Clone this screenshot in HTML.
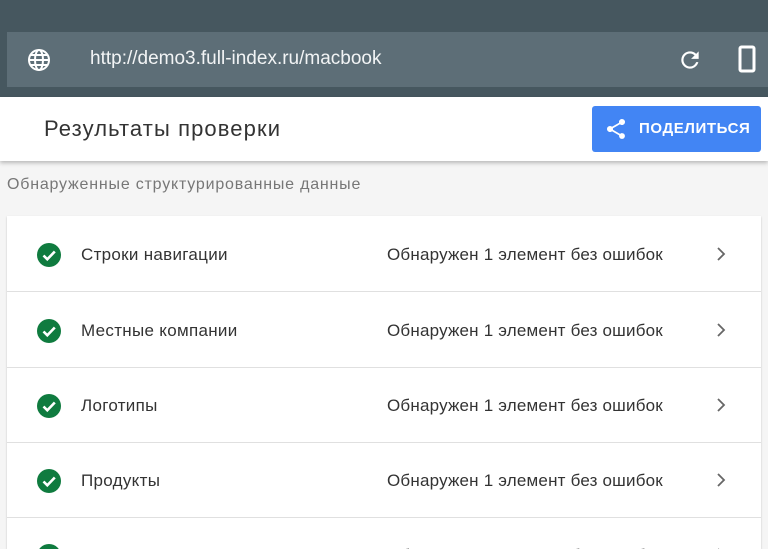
<!DOCTYPE html>
<html><head><meta charset="utf-8"><style>
*{margin:0;padding:0;box-sizing:border-box}
html,body{width:768px;height:549px;overflow:hidden}
body{background:#f5f5f5;font-family:"Liberation Sans",Roboto,sans-serif;position:relative}
.top{position:absolute;left:0;top:0;width:768px;height:97px;background:#46575f}
.url{position:absolute;left:7px;top:32px;width:761px;height:55px;background:#5d6e77}
.url .t{position:absolute;left:83px;top:16px;color:#f2f4f5;font-size:19px}
.hdr{position:absolute;left:0;top:97px;width:768px;height:64px;background:#fff;box-shadow:0 2px 4px rgba(0,0,0,.25)}
.hdr .t{position:absolute;left:44px;top:19px;font-size:22px;letter-spacing:1.1px;color:#333}
.btn{position:absolute;left:592px;top:9px;width:169px;height:46px;background:#4285f4;border-radius:3px;color:#fff;font-weight:bold;font-size:15px}
.btn span{position:absolute;left:47px;top:14px;letter-spacing:.6px}
.sub{position:absolute;left:7px;top:176px;font-size:16px;letter-spacing:.8px;color:#777}
.card{position:absolute;left:7px;top:216px;width:754px;height:333px;background:#fff;box-shadow:0 1px 2px rgba(0,0,0,.2)}
.row{position:absolute;left:0;width:754px;height:76px;border-bottom:1px solid #e0e0e0}
.row .ic{position:absolute;left:30px;top:27px}
.row .n{position:absolute;left:74px;top:29px;font-size:17px;letter-spacing:.3px;color:#333}
.row .s{position:absolute;left:380px;top:29px;font-size:17px;letter-spacing:.2px;color:#333}
.row .c{position:absolute;left:708px;top:30px}
</style></head><body>
<div class="top"></div>
<div class="url">
<svg style="position:absolute;left:20px;top:16px" width="24" height="24" viewBox="0 0 24 24"><circle cx="12" cy="12" r="10" fill="none" stroke="#fff" stroke-width="2"/><ellipse cx="12" cy="12" rx="4" ry="10" fill="none" stroke="#fff" stroke-width="2"/><path d="M2 12h20M4 7h16M4 17h16" stroke="#fff" stroke-width="2"/></svg>
<div class="t">http://demo3.full-index.ru/macbook</div>
<svg style="position:absolute;left:670px;top:15px" width="26" height="26" viewBox="0 0 24 24"><path d="M17.65 6.35A7.96 7.96 0 0 0 12 4a8 8 0 1 0 7.73 10h-2.08A6 6 0 1 1 12 6c1.66 0 3.14.69 4.22 1.78L13 11h7V4z" fill="#fff"/></svg>
<svg style="position:absolute;left:731px;top:13px" width="18" height="28" viewBox="0 0 18 28"><rect x="2" y="2" width="14" height="24" rx="1.5" fill="none" stroke="#fff" stroke-width="3"/></svg>
</div>
<div class="hdr"><div class="t">Результаты проверки</div>
<div class="btn"><svg style="position:absolute;left:12px;top:11px" width="24" height="24" viewBox="0 0 24 24"><path d="M18 16.08c-.76 0-1.44.3-1.96.77L8.91 12.7c.05-.23.09-.46.09-.7s-.04-.47-.09-.7l7.05-4.11A2.99 2.99 0 0 0 21 5a3 3 0 1 0-5.91.7L8.04 9.81A2.99 2.99 0 0 0 3 12a3 3 0 0 0 5.04 2.19l7.12 4.16c-.05.21-.08.43-.08.65A2.92 2.92 0 1 0 18 16.08z" fill="#fff"/></svg><span>ПОДЕЛИТЬСЯ</span></div></div>
<div class="sub">Обнаруженные структурированные данные</div>
<div class="card">
<div class="row" style="top:0"><svg class="ic" width="24" height="24" viewBox="0 0 24 24"><circle cx="12" cy="12" r="12" fill="#0f7b3f"/><path d="M6.5 12.5l3.8 3.8 7.5-7.8" fill="none" stroke="#fff" stroke-width="2.6"/></svg><div class="n">Строки навигации</div><div class="s">Обнаружен 1 элемент без ошибок</div><svg class="c" width="12" height="16" viewBox="0 0 12 16"><path d="M3 2l6 6-6 6" fill="none" stroke="#666" stroke-width="1.8"/></svg></div>
<div class="row" style="top:76px"><svg class="ic" width="24" height="24" viewBox="0 0 24 24"><circle cx="12" cy="12" r="12" fill="#0f7b3f"/><path d="M6.5 12.5l3.8 3.8 7.5-7.8" fill="none" stroke="#fff" stroke-width="2.6"/></svg><div class="n">Местные компании</div><div class="s">Обнаружен 1 элемент без ошибок</div><svg class="c" width="12" height="16" viewBox="0 0 12 16"><path d="M3 2l6 6-6 6" fill="none" stroke="#666" stroke-width="1.8"/></svg></div>
<div class="row" style="top:151px"><svg class="ic" width="24" height="24" viewBox="0 0 24 24"><circle cx="12" cy="12" r="12" fill="#0f7b3f"/><path d="M6.5 12.5l3.8 3.8 7.5-7.8" fill="none" stroke="#fff" stroke-width="2.6"/></svg><div class="n">Логотипы</div><div class="s">Обнаружен 1 элемент без ошибок</div><svg class="c" width="12" height="16" viewBox="0 0 12 16"><path d="M3 2l6 6-6 6" fill="none" stroke="#666" stroke-width="1.8"/></svg></div>
<div class="row" style="top:226px"><svg class="ic" width="24" height="24" viewBox="0 0 24 24"><circle cx="12" cy="12" r="12" fill="#0f7b3f"/><path d="M6.5 12.5l3.8 3.8 7.5-7.8" fill="none" stroke="#fff" stroke-width="2.6"/></svg><div class="n">Продукты</div><div class="s">Обнаружен 1 элемент без ошибок</div><svg class="c" width="12" height="16" viewBox="0 0 12 16"><path d="M3 2l6 6-6 6" fill="none" stroke="#666" stroke-width="1.8"/></svg></div>
<div class="row" style="top:301px;border:0;height:32px;overflow:hidden"><svg class="ic" width="24" height="24" viewBox="0 0 24 24"><circle cx="12" cy="12" r="12" fill="#0f7b3f"/><path d="M6.5 12.5l3.8 3.8 7.5-7.8" fill="none" stroke="#fff" stroke-width="2.6"/></svg><div class="n">Предложения</div><div class="s">Обнаружен 1 элемент без ошибок</div><svg class="c" width="12" height="16" viewBox="0 0 12 16"><path d="M3 2l6 6-6 6" fill="none" stroke="#666" stroke-width="1.8"/></svg></div>
</div>
</body></html>
